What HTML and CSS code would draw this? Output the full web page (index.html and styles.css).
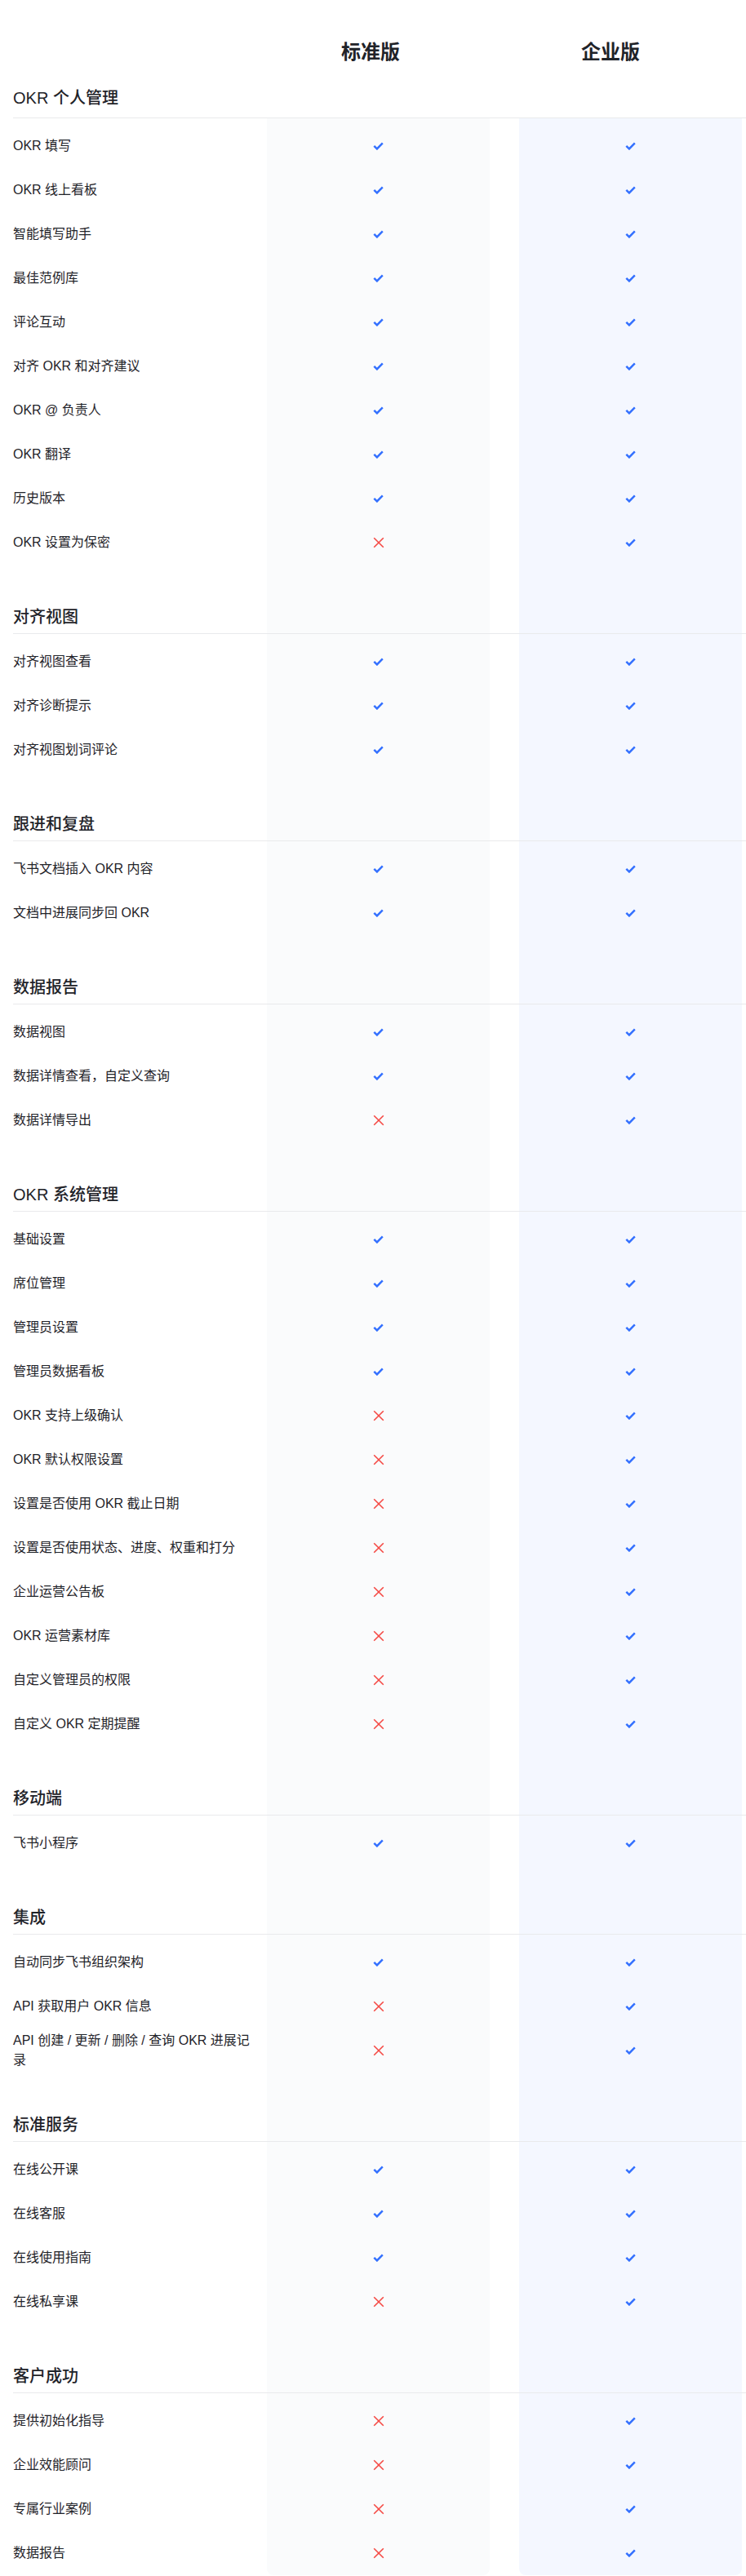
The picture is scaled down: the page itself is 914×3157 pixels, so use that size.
FILE: index.html
```html
<!DOCTYPE html>
<html lang="zh-CN">
<head>
    <meta charset="UTF-8">
    <meta name="viewport" content="width=device-width, initial-scale=1.0">
    <title>OKR 版本对比</title>
    <link rel="stylesheet" href="styles.css">
</head>
<body>
    <svg class="defs" aria-hidden="true">
        <symbol id="yes" viewBox="0 0 13 10">
            <path d="M1.3 4.9 L4.9 8.4 L11.8 1.3" fill="none" stroke="#3370ff" stroke-width="2.5"/>
        </symbol>
        <symbol id="no" viewBox="0 0 14 14">
            <path d="M1.2 1.2 L12.8 12.8 M12.8 1.2 L1.2 12.8" fill="none" stroke="#f54a45" stroke-width="1.6"/>
        </symbol>
    </svg>

    <div class="plans">
        <div></div>
        <div class="plan-name">标准版</div>
        <div class="plan-name">企业版</div>
    </div>

    <div class="board">
        <div class="col-bg col-std"></div>
        <div class="col-bg col-ent"></div>

        <div class="sections">
            <div class="section">
                <h2 class="section-title first">OKR 个人管理</h2>
                <div class="rows">
                    <div class="row"><div class="label">OKR 填写</div><div class="std"><svg class="yes"><use href="#yes"/></svg></div><div class="ent"><svg class="yes"><use href="#yes"/></svg></div></div>
                    <div class="row"><div class="label">OKR 线上看板</div><div class="std"><svg class="yes"><use href="#yes"/></svg></div><div class="ent"><svg class="yes"><use href="#yes"/></svg></div></div>
                    <div class="row"><div class="label">智能填写助手</div><div class="std"><svg class="yes"><use href="#yes"/></svg></div><div class="ent"><svg class="yes"><use href="#yes"/></svg></div></div>
                    <div class="row"><div class="label">最佳范例库</div><div class="std"><svg class="yes"><use href="#yes"/></svg></div><div class="ent"><svg class="yes"><use href="#yes"/></svg></div></div>
                    <div class="row"><div class="label">评论互动</div><div class="std"><svg class="yes"><use href="#yes"/></svg></div><div class="ent"><svg class="yes"><use href="#yes"/></svg></div></div>
                    <div class="row"><div class="label">对齐 OKR 和对齐建议</div><div class="std"><svg class="yes"><use href="#yes"/></svg></div><div class="ent"><svg class="yes"><use href="#yes"/></svg></div></div>
                    <div class="row"><div class="label">OKR @ 负责人</div><div class="std"><svg class="yes"><use href="#yes"/></svg></div><div class="ent"><svg class="yes"><use href="#yes"/></svg></div></div>
                    <div class="row"><div class="label">OKR 翻译</div><div class="std"><svg class="yes"><use href="#yes"/></svg></div><div class="ent"><svg class="yes"><use href="#yes"/></svg></div></div>
                    <div class="row"><div class="label">历史版本</div><div class="std"><svg class="yes"><use href="#yes"/></svg></div><div class="ent"><svg class="yes"><use href="#yes"/></svg></div></div>
                    <div class="row"><div class="label">OKR 设置为保密</div><div class="std"><svg class="no"><use href="#no"/></svg></div><div class="ent"><svg class="yes"><use href="#yes"/></svg></div></div>
                </div>
            </div>

            <div class="section">
                <h2 class="section-title">对齐视图</h2>
                <div class="rows">
                    <div class="row"><div class="label">对齐视图查看</div><div class="std"><svg class="yes"><use href="#yes"/></svg></div><div class="ent"><svg class="yes"><use href="#yes"/></svg></div></div>
                    <div class="row"><div class="label">对齐诊断提示</div><div class="std"><svg class="yes"><use href="#yes"/></svg></div><div class="ent"><svg class="yes"><use href="#yes"/></svg></div></div>
                    <div class="row"><div class="label">对齐视图划词评论</div><div class="std"><svg class="yes"><use href="#yes"/></svg></div><div class="ent"><svg class="yes"><use href="#yes"/></svg></div></div>
                </div>
            </div>

            <div class="section">
                <h2 class="section-title">跟进和复盘</h2>
                <div class="rows">
                    <div class="row"><div class="label">飞书文档插入 OKR 内容</div><div class="std"><svg class="yes"><use href="#yes"/></svg></div><div class="ent"><svg class="yes"><use href="#yes"/></svg></div></div>
                    <div class="row"><div class="label">文档中进展同步回 OKR</div><div class="std"><svg class="yes"><use href="#yes"/></svg></div><div class="ent"><svg class="yes"><use href="#yes"/></svg></div></div>
                </div>
            </div>

            <div class="section">
                <h2 class="section-title">数据报告</h2>
                <div class="rows">
                    <div class="row"><div class="label">数据视图</div><div class="std"><svg class="yes"><use href="#yes"/></svg></div><div class="ent"><svg class="yes"><use href="#yes"/></svg></div></div>
                    <div class="row"><div class="label">数据详情查看，自定义查询</div><div class="std"><svg class="yes"><use href="#yes"/></svg></div><div class="ent"><svg class="yes"><use href="#yes"/></svg></div></div>
                    <div class="row"><div class="label">数据详情导出</div><div class="std"><svg class="no"><use href="#no"/></svg></div><div class="ent"><svg class="yes"><use href="#yes"/></svg></div></div>
                </div>
            </div>

            <div class="section">
                <h2 class="section-title">OKR 系统管理</h2>
                <div class="rows">
                    <div class="row"><div class="label">基础设置</div><div class="std"><svg class="yes"><use href="#yes"/></svg></div><div class="ent"><svg class="yes"><use href="#yes"/></svg></div></div>
                    <div class="row"><div class="label">席位管理</div><div class="std"><svg class="yes"><use href="#yes"/></svg></div><div class="ent"><svg class="yes"><use href="#yes"/></svg></div></div>
                    <div class="row"><div class="label">管理员设置</div><div class="std"><svg class="yes"><use href="#yes"/></svg></div><div class="ent"><svg class="yes"><use href="#yes"/></svg></div></div>
                    <div class="row"><div class="label">管理员数据看板</div><div class="std"><svg class="yes"><use href="#yes"/></svg></div><div class="ent"><svg class="yes"><use href="#yes"/></svg></div></div>
                    <div class="row"><div class="label">OKR 支持上级确认</div><div class="std"><svg class="no"><use href="#no"/></svg></div><div class="ent"><svg class="yes"><use href="#yes"/></svg></div></div>
                    <div class="row"><div class="label">OKR 默认权限设置</div><div class="std"><svg class="no"><use href="#no"/></svg></div><div class="ent"><svg class="yes"><use href="#yes"/></svg></div></div>
                    <div class="row"><div class="label">设置是否使用 OKR 截止日期</div><div class="std"><svg class="no"><use href="#no"/></svg></div><div class="ent"><svg class="yes"><use href="#yes"/></svg></div></div>
                    <div class="row"><div class="label">设置是否使用状态、进度、权重和打分</div><div class="std"><svg class="no"><use href="#no"/></svg></div><div class="ent"><svg class="yes"><use href="#yes"/></svg></div></div>
                    <div class="row"><div class="label">企业运营公告板</div><div class="std"><svg class="no"><use href="#no"/></svg></div><div class="ent"><svg class="yes"><use href="#yes"/></svg></div></div>
                    <div class="row"><div class="label">OKR 运营素材库</div><div class="std"><svg class="no"><use href="#no"/></svg></div><div class="ent"><svg class="yes"><use href="#yes"/></svg></div></div>
                    <div class="row"><div class="label">自定义管理员的权限</div><div class="std"><svg class="no"><use href="#no"/></svg></div><div class="ent"><svg class="yes"><use href="#yes"/></svg></div></div>
                    <div class="row"><div class="label">自定义 OKR 定期提醒</div><div class="std"><svg class="no"><use href="#no"/></svg></div><div class="ent"><svg class="yes"><use href="#yes"/></svg></div></div>
                </div>
            </div>

            <div class="section">
                <h2 class="section-title">移动端</h2>
                <div class="rows">
                    <div class="row"><div class="label">飞书小程序</div><div class="std"><svg class="yes"><use href="#yes"/></svg></div><div class="ent"><svg class="yes"><use href="#yes"/></svg></div></div>
                </div>
            </div>

            <div class="section">
                <h2 class="section-title">集成</h2>
                <div class="rows">
                    <div class="row"><div class="label">自动同步飞书组织架构</div><div class="std"><svg class="yes"><use href="#yes"/></svg></div><div class="ent"><svg class="yes"><use href="#yes"/></svg></div></div>
                    <div class="row"><div class="label">API 获取用户 OKR 信息</div><div class="std"><svg class="no"><use href="#no"/></svg></div><div class="ent"><svg class="yes"><use href="#yes"/></svg></div></div>
                    <div class="row"><div class="label">API 创建 / 更新 / 删除 / 查询 OKR 进展记录</div><div class="std"><svg class="no"><use href="#no"/></svg></div><div class="ent"><svg class="yes"><use href="#yes"/></svg></div></div>
                </div>
            </div>

            <div class="section">
                <h2 class="section-title">标准服务</h2>
                <div class="rows">
                    <div class="row"><div class="label">在线公开课</div><div class="std"><svg class="yes"><use href="#yes"/></svg></div><div class="ent"><svg class="yes"><use href="#yes"/></svg></div></div>
                    <div class="row"><div class="label">在线客服</div><div class="std"><svg class="yes"><use href="#yes"/></svg></div><div class="ent"><svg class="yes"><use href="#yes"/></svg></div></div>
                    <div class="row"><div class="label">在线使用指南</div><div class="std"><svg class="yes"><use href="#yes"/></svg></div><div class="ent"><svg class="yes"><use href="#yes"/></svg></div></div>
                    <div class="row"><div class="label">在线私享课</div><div class="std"><svg class="no"><use href="#no"/></svg></div><div class="ent"><svg class="yes"><use href="#yes"/></svg></div></div>
                </div>
            </div>

            <div class="section">
                <h2 class="section-title">客户成功</h2>
                <div class="rows">
                    <div class="row"><div class="label">提供初始化指导</div><div class="std"><svg class="no"><use href="#no"/></svg></div><div class="ent"><svg class="yes"><use href="#yes"/></svg></div></div>
                    <div class="row"><div class="label">企业效能顾问</div><div class="std"><svg class="no"><use href="#no"/></svg></div><div class="ent"><svg class="yes"><use href="#yes"/></svg></div></div>
                    <div class="row"><div class="label">专属行业案例</div><div class="std"><svg class="no"><use href="#no"/></svg></div><div class="ent"><svg class="yes"><use href="#yes"/></svg></div></div>
                    <div class="row"><div class="label">数据报告</div><div class="std"><svg class="no"><use href="#no"/></svg></div><div class="ent"><svg class="yes"><use href="#yes"/></svg></div></div>
                </div>
            </div>
        </div>
    </div>
</body>
</html>
```

FILE: styles.css
```css
body {
    margin: 0;
    padding: 0 0 0 16px;
    font-family: "Liberation Sans", "Noto Sans CJK SC", sans-serif;
    color: #1f2329;
    background: #fff;
}
.defs {
    display: none;
}
.plans {
    display: grid;
    grid-template-columns: 291px 294px 294px;
    padding-top: 48px;
}
.plan-name {
    text-align: center;
    font-size: 24px;
    line-height: 32px;
    font-weight: 600;
}
.board {
    display: grid;
    grid-template-columns: 311px 273px 36px 273px 5px;
}
.col-bg {
    grid-row: 1;
    margin-top: 65px;
    border-radius: 0 0 8px 8px;
}
.col-std {
    grid-column: 2;
    background: #fafbfc;
}
.col-ent {
    grid-column: 4;
    background: #f4f7ff;
}
.sections {
    grid-row: 1;
    grid-column: 1 / -1;
}
.section-title {
    margin: 0;
    padding: 50px 0 6px;
    font-size: 20px;
    line-height: 28px;
    font-weight: 500;
    border-bottom: 1px solid #e9eaec;
}
.section-title.first {
    padding: 26px 0 10px;
}
.rows {
    padding-top: 7px;
}
.row {
    display: grid;
    grid-template-columns: 311px 273px 36px 273px;
    min-height: 54px;
    align-items: center;
}
.label {
    padding-right: 16px;
    font-size: 16px;
    line-height: 24px;
}
.std, .ent {
    display: flex;
    justify-content: center;
}
.std {
    grid-column: 2;
}
.ent {
    grid-column: 4;
}
.yes {
    width: 13px;
    height: 10px;
}
.no {
    width: 14px;
    height: 14px;
}
```
